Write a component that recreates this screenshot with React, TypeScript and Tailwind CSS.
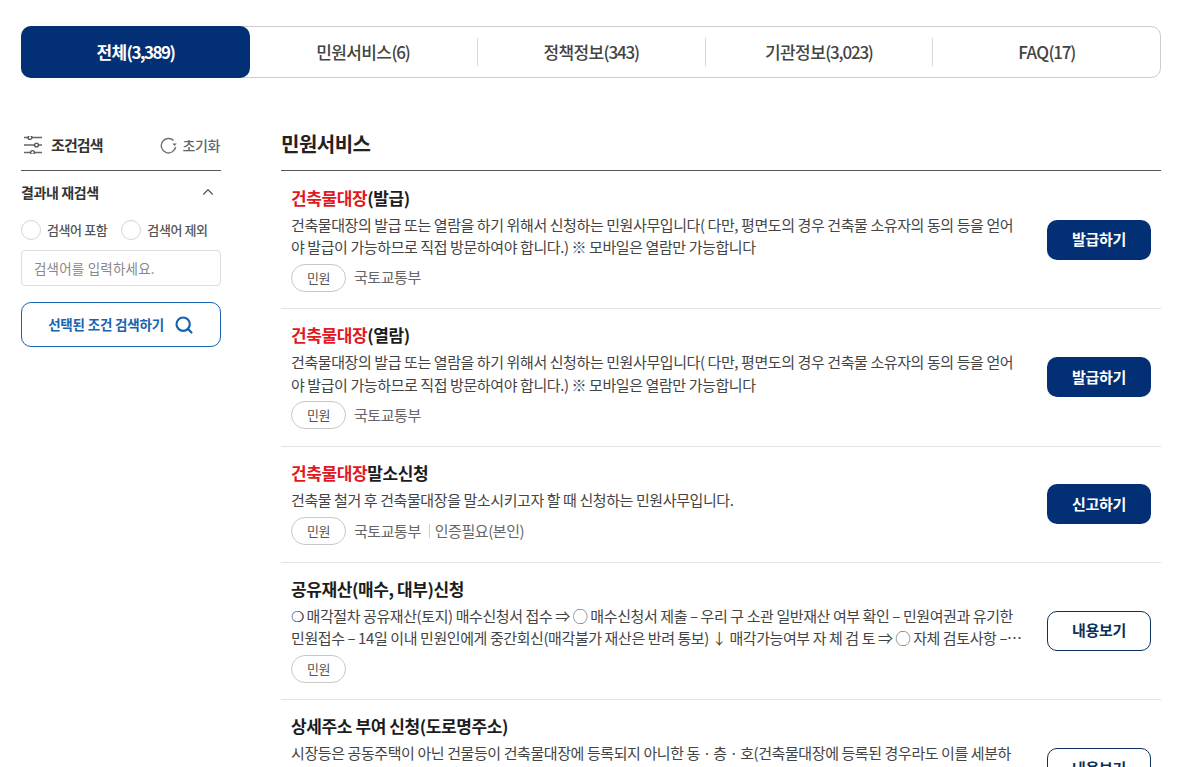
import { ChevronUp, Search } from 'lucide-react';

const tabs = [
    { name: '민원서비스', count: '(6)' },
    { name: '정책정보', count: '(343)' },
    { name: '기관정보', count: '(3,023)' },
    { name: 'FAQ', count: '(17)' },
];

const desc = '건축물대장의 발급 또는 열람을 하기 위해서 신청하는 민원사무입니다( 다만, 평면도의 경우 건축물 소유자의 동의 등을 얻어야 발급이 가능하므로 직접 방문하여야 합니다.) ※ 모바일은 열람만 가능합니다';

type Row = {
    red?: string;
    title: string;
    desc: string;
    org?: string;
    auth?: string;
    action: string;
    solid: boolean;
};

const rows: Row[] = [
    { red: '건축물대장', title: '(발급)', desc, org: '국토교통부', action: '발급하기', solid: true },
    { red: '건축물대장', title: '(열람)', desc, org: '국토교통부', action: '발급하기', solid: true },
    {
        red: '건축물대장',
        title: '말소신청',
        desc: '건축물 철거 후 건축물대장을 말소시키고자 할 때 신청하는 민원사무입니다.',
        org: '국토교통부',
        auth: '인증필요(본인)',
        action: '신고하기',
        solid: true,
    },
    {
        title: '공유재산(매수, 대부)신청',
        desc: '❍ 매각절차 공유재산(토지) 매수신청서 접수 ⇒ ◯ 매수신청서 제출 – 우리 구 소관 일반재산 여부 확인 – 민원여권과 유기한 민원접수 – 14일 이내 민원인에게 중간회신(매각불가 재산은 반려 통보) ↓ 매각가능여부 자 체 검 토 ⇒ ◯ 자체 검토사항 – 재산의 위치, 면적 및 현황 확인 – 관련 부서 협의 진행',
        action: '내용보기',
        solid: false,
    },
    {
        title: '상세주소 부여 신청(도로명주소)',
        desc: '시장등은 공동주택이 아닌 건물등이 건축물대장에 등록되지 아니한 동ㆍ층ㆍ호(건축물대장에 등록된 경우라도 이를 세분하여 임대하는 경우를 포함한다)에 대하여 상세주소를 부여할 수 있습니다',
        action: '내용보기',
        solid: false,
    },
];

function FilterIcon() {
    return (
        <svg width="18" height="18" viewBox="0 0 18 18" fill="none" stroke="#666666" strokeWidth="1.4">
            <path d="M0 1.5h18M0 9h18M0 16.5h18" />
            <circle cx="6" cy="1.5" r="1.9" fill="white" stroke="#555555" />
            <circle cx="12.5" cy="9" r="1.9" fill="white" stroke="#555555" />
            <circle cx="8.5" cy="16.5" r="1.9" fill="white" stroke="#555555" />
        </svg>
    );
}

function ResetIcon() {
    return (
        <svg width="17" height="17" viewBox="0 0 17 17" fill="none">
            <path d="M13.6 3.6A7.2 7.2 0 1 0 15.6 10" stroke="#707070" strokeWidth="1.4" />
            <path d="M12.4 6.4h4.4l-2.2 2.6z" fill="#707070" />
        </svg>
    );
}

function ResultRow({ row }: { row: Row }) {
    return (
        <div className="flex items-center border-b border-[#e2e2e2] pt-4 pb-[16.5px] pl-[10px] pr-[10px]">
            <div className="w-[733px] min-w-0">
                <div className="text-[17px] leading-[20px] font-bold tracking-[-0.4px] text-[#1c1c1c]">
                    {row.red ? <span className="text-[#e0181f]">{row.red}</span> : null}
                    {row.title}
                </div>
                <p className="mt-[6px] line-clamp-2 min-h-[23.5px] text-[15px] leading-[22.5px] tracking-[-0.41px] text-[#444444]">
                    {row.desc}
                </p>
                <div className="mt-[5px] flex items-center text-[15px] tracking-[-0.45px] text-[#666666]">
                    <span className="flex h-[28px] w-[55px] items-center justify-center rounded-full border border-[#c8c8c8] text-[13px] text-[#555555]">
                        민원
                    </span>
                    {row.org ? <span className="ml-2">{row.org}</span> : null}
                    {row.auth ? (
                        <span className="ml-[8px] border-l border-[#d0d0d0] pl-[5px] leading-[14px]">{row.auth}</span>
                    ) : null}
                </div>
            </div>
            <div
                className={`ml-auto flex h-[40px] w-[104px] shrink-0 items-center justify-center rounded-[10px] text-[15px] font-bold tracking-[-0.3px] ${
                    row.solid ? 'bg-[#033074] text-white' : 'border border-[#0b2f5e] bg-white text-[#0b2f5e]'
                }`}
            >
                {row.action}
            </div>
        </div>
    );
}

function Sidebar() {
    return (
        <aside className="w-[200px] shrink-0 pt-[50px]">
            <div className="flex h-[43px] items-center justify-between border-b border-[#555555] pb-[8px] pl-[3px]">
                <div className="flex items-center gap-[9px] text-[15px] font-bold tracking-[-0.9px] text-[#333333]">
                    <FilterIcon />
                    조건검색
                </div>
                <div className="flex items-center gap-[6px] pr-[1px] text-[14px] font-medium tracking-[-0.4px] text-[#666666]">
                    <ResetIcon />
                    초기화
                </div>
            </div>
            <div className="mt-[12px] flex h-[18px] items-center justify-between pr-[4px] text-[14px] font-bold tracking-[-0.4px] text-[#333333]">
                결과내 재검색
                <ChevronUp className="h-[18px] w-[18px] text-[#555555]" strokeWidth={1.5} />
            </div>
            <div className="mt-[19px] flex h-5 items-center text-[13px] font-medium tracking-[-0.4px] text-[#555555]">
                <span className="h-5 w-5 rounded-full border border-[#d5d5d5]" />
                <span className="ml-[6px]">검색어 포함</span>
                <span className="ml-[14px] h-5 w-5 rounded-full border border-[#d5d5d5]" />
                <span className="ml-[6px]">검색어 제외</span>
            </div>
            <div className="mt-[10px] flex h-[36px] items-center rounded-[4px] border border-[#dddddd] pl-3 text-[13.5px] tracking-[0.2px] text-[#888888]">
                검색어를 입력하세요.
            </div>
            <div className="mt-4 flex h-[45px] items-center justify-center gap-[10px] rounded-[10px] border border-[#1763b0] text-[13.5px] font-bold tracking-[-0.2px] text-[#1763b0]">
                선택된 조건 검색하기
                <Search className="h-5 w-5" strokeWidth={2.6} />
            </div>
        </aside>
    );
}

export default function App() {
    return (
        <div
            className="h-[767px] overflow-hidden bg-white px-[21px] pt-[26px]"
            style={{ fontFamily: '"Noto Sans CJK KR", "Noto Sans", sans-serif' }}
        >
            <div className="flex h-[52px] w-[1140px] rounded-[10px] border border-[#cccccc]">
                <div className="-m-px flex h-[52px] w-[229px] shrink-0 items-center justify-center rounded-[10px] bg-[#033074] text-[17px] font-bold tracking-[-0.6px] text-white">
                    전체<span className="tracking-[-1.5px]">(3,389)</span>
                </div>
                {tabs.map((tab, i) => (
                    <div key={tab.name} className="flex flex-1 items-center justify-center">
                        <div
                            className={`flex h-7 w-full items-center justify-center text-[17px] font-medium tracking-[-0.6px] text-[#444444] ${
                                i > 0 ? 'border-l border-[#d8d8d8]' : ''
                            }`}
                        >
                            {tab.name}
                            <span className="tracking-[-1.2px]">{tab.count}</span>
                        </div>
                    </div>
                ))}
            </div>
            <div className="flex w-[1140px] gap-[60px]">
                <Sidebar />
                <main className="min-w-0 flex-1 pt-[50px]">
                    <h2 className="flex h-[43px] items-start border-b border-[#555555] text-[20px] leading-[31px] font-bold tracking-[-0.5px] text-[#222222]">
                        민원서비스
                    </h2>
                    <div className="pt-[0.6px]">
                        {rows.map((row) => (
                            <ResultRow key={row.title} row={row} />
                        ))}
                    </div>
                </main>
            </div>
        </div>
    );
}
